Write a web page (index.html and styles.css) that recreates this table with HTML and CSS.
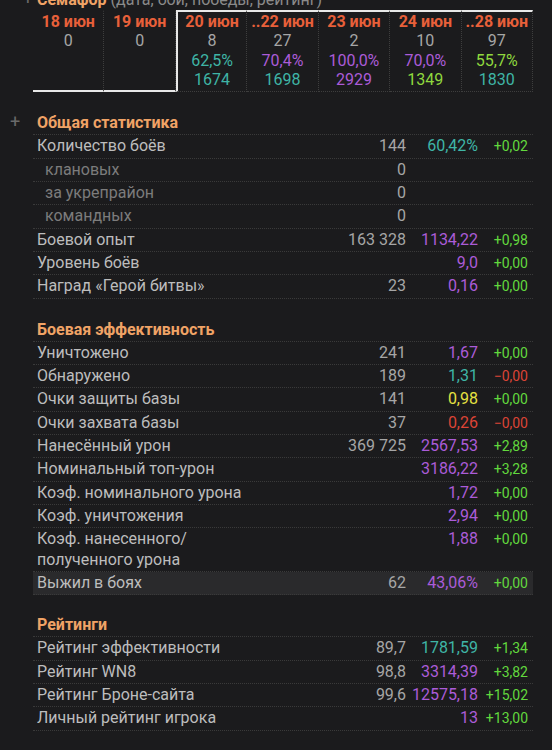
FILE: index.html
```html
<!DOCTYPE html>
<html lang="ru">

<head>
    <meta charset="UTF-8">
    <meta name="viewport" content="width=device-width, initial-scale=1.0">
    <title>Статистика</title>
    <link rel="stylesheet" href="styles.css">
</head>

<body>
    <!-- Семафор -->
    <div class="section semaphore">
        <div class="toggle">+</div>
        <div class="content">
            <div class="title">Семафор <span class="hint">(дата, бои, победы, рейтинг)</span></div>
            <div class="sem-grid">
                <div class="day old">
                    <div class="date">18 июн</div>
                    <div class="num">0</div>
                </div>
                <div class="day old">
                    <div class="date">19 июн</div>
                    <div class="num">0</div>
                </div>
                <div class="day cur first">
                    <div class="date">20 июн</div>
                    <div class="num">8</div>
                    <div class="teal">62,5%</div>
                    <div class="teal">1674</div>
                </div>
                <div class="day cur">
                    <div class="date">..22 июн</div>
                    <div class="num">27</div>
                    <div class="purple">70,4%</div>
                    <div class="teal">1698</div>
                </div>
                <div class="day cur">
                    <div class="date">23 июн</div>
                    <div class="num">2</div>
                    <div class="purple">100,0%</div>
                    <div class="purple">2929</div>
                </div>
                <div class="day cur">
                    <div class="date">24 июн</div>
                    <div class="num">10</div>
                    <div class="purple">70,0%</div>
                    <div class="lime">1349</div>
                </div>
                <div class="day cur">
                    <div class="date">..28 июн</div>
                    <div class="num">97</div>
                    <div class="lime">55,7%</div>
                    <div class="teal">1830</div>
                </div>
            </div>
        </div>
    </div>

    <!-- Общая статистика -->
    <div class="section">
        <div class="toggle">+</div>
        <div class="content">
            <div class="row head">Общая статистика</div>
            <div class="row"><span>Количество боёв</span><span class="val">144</span><span class="teal">60,42%</span><span class="delta green">+0,02</span></div>
            <div class="row sub"><span>клановых</span><span class="val">0</span><span></span><span></span></div>
            <div class="row sub"><span>за укрепрайон</span><span class="val">0</span><span></span><span></span></div>
            <div class="row sub"><span>командных</span><span class="val">0</span><span></span><span></span></div>
            <div class="row"><span>Боевой опыт</span><span class="val">163&nbsp;328</span><span class="purple">1134,22</span><span class="delta green">+0,98</span></div>
            <div class="row"><span>Уровень боёв</span><span class="val"></span><span class="purple">9,0</span><span class="delta green">+0,00</span></div>
            <div class="row"><span>Наград «Герой битвы»</span><span class="val">23</span><span class="purple">0,16</span><span class="delta green">+0,00</span></div>
        </div>
    </div>

    <!-- Боевая эффективность -->
    <div class="section">
        <div class="toggle"></div>
        <div class="content">
            <div class="row head">Боевая эффективность</div>
            <div class="row"><span>Уничтожено</span><span class="val">241</span><span class="purple">1,67</span><span class="delta green">+0,00</span></div>
            <div class="row"><span>Обнаружено</span><span class="val">189</span><span class="teal">1,31</span><span class="delta red">−0,00</span></div>
            <div class="row"><span>Очки защиты базы</span><span class="val">141</span><span class="yellow">0,98</span><span class="delta green">+0,00</span></div>
            <div class="row"><span>Очки захвата базы</span><span class="val">37</span><span class="red">0,26</span><span class="delta red">−0,00</span></div>
            <div class="row"><span>Нанесённый урон</span><span class="val">369&nbsp;725</span><span class="purple">2567,53</span><span class="delta green">+2,89</span></div>
            <div class="row"><span>Номинальный топ-урон</span><span class="val"></span><span class="purple">3186,22</span><span class="delta green">+3,28</span></div>
            <div class="row"><span>Коэф. номинального урона</span><span class="val"></span><span class="purple">1,72</span><span class="delta green">+0,00</span></div>
            <div class="row"><span>Коэф. уничтожения</span><span class="val"></span><span class="purple">2,94</span><span class="delta green">+0,00</span></div>
            <div class="row"><span>Коэф. нанесенного/<br>полученного урона</span><span class="val"></span><span class="purple">1,88</span><span class="delta green">+0,00</span></div>
            <div class="row marked"><span>Выжил в боях</span><span class="val">62</span><span class="purple">43,06%</span><span class="delta green">+0,00</span></div>
        </div>
    </div>

    <!-- Рейтинги -->
    <div class="section last-block">
        <div class="toggle"></div>
        <div class="content">
            <div class="row head">Рейтинги</div>
            <div class="row"><span>Рейтинг эффективности</span><span class="val">89,7</span><span class="teal">1781,59</span><span class="delta green">+1,34</span></div>
            <div class="row"><span>Рейтинг WN8</span><span class="val">98,8</span><span class="purple">3314,39</span><span class="delta green">+3,82</span></div>
            <div class="row"><span>Рейтинг Броне-сайта</span><span class="val">99,6</span><span class="purple">12575,18</span><span class="delta green">+15,02</span></div>
            <div class="row"><span>Личный рейтинг игрока</span><span class="val"></span><span class="purple">13</span><span class="delta green">+13,00</span></div>
        </div>
    </div>
</body>

</html>
```

FILE: styles.css
```css
/* Page */
body {
    margin: 0;
    background-color: #1b1b1d;
    color: #bdbdbd;
    font-family: Roboto, "Noto Sans", sans-serif;
    font-size: 16px;
    overflow: hidden;
}

/* Section with the +/- toggle on the left */
.section {
    display: flex;
    margin-top: 20px;
}

.semaphore {
    margin-top: 0;
}

.last-block {
    margin-top: 19px;
}

.toggle {
    width: 33px;
    flex: none;
    text-align: center;
    color: #6a6a6a;
    font-size: 18px;
    line-height: 20px;
    padding-right: 3px;
    box-sizing: border-box;
}

.semaphore .toggle {
    margin-top: -11px;
    text-align: right;
    padding-right: 0;
}

.content {
    width: 500px;
}

/* Semaphore header */
.title {
    margin-top: -11px;
    padding-left: 4px;
    line-height: 21px;
    color: #f0a366;
    font-weight: bold;
}

.hint {
    color: #8a8a8a;
    font-weight: normal;
}

.sem-grid {
    display: grid;
    grid-template-columns: repeat(7, 1fr);
}

.day {
    text-align: center;
    line-height: 19.3px;
    padding-bottom: 1px;
    border-right: 1px dotted #3e3e3e;
    border-top: 2px solid transparent;
}

.day.old {
    border-bottom: 2px solid #e8e8e8;
}

.day.cur {
    border-top: 2px solid #e8e8e8;
    border-bottom: 1px dotted #3e3e3e;
    padding-bottom: 2px;
}

.day.first {
    border-left: 2px solid #e8e8e8;
}

.date {
    color: #e8603a;
    font-weight: bold;
}

.num {
    color: #a6a6a6;
}

/* Stat rows */
.row {
    display: grid;
    grid-template-columns: 1fr 110px 72px 50px;
    padding: 1px 5px 1px 4px;
    line-height: 20.3px;
    border-bottom: 1px dotted #3a3a3a;
}

.row span:not(:first-child) {
    text-align: right;
}

.row .delta {
    font-size: 14px;
}

.row.head {
    display: block;
    color: #f0a366;
    font-weight: bold;
}

.row.sub span:first-child {
    padding-left: 8px;
    color: #7c7c7c;
}

.row.marked {
    background-color: #2a2a2c;
}

.val {
    color: #a6a6a6;
}

/* Value colours */
.teal {
    color: #3fb5a6;
}

.purple {
    color: #ab5cd8;
}

.green {
    color: #62d83e;
}

.lime {
    color: #8fd83e;
}

.red {
    color: #dc4436;
}

.yellow {
    color: #e6e142;
}
```
